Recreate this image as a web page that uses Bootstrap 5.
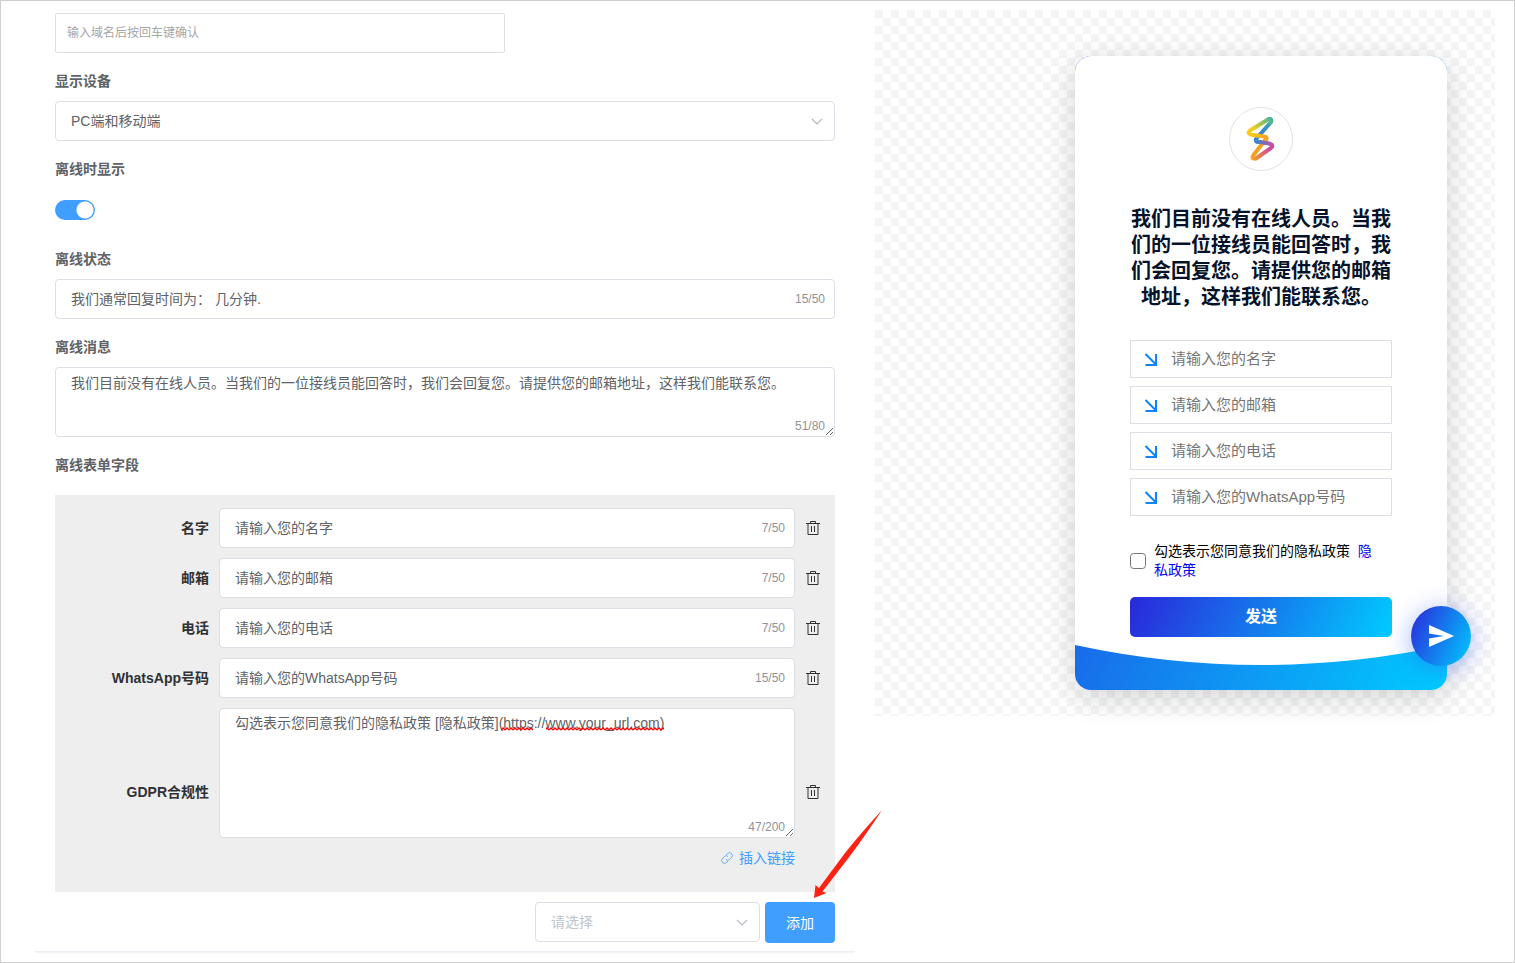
<!DOCTYPE html>
<html lang="zh-CN">
<head>
<meta charset="utf-8">
<meta name="viewport" content="width=device-width, initial-scale=1">
<title>离线表单设置</title>
<link href="https://cdn.jsdelivr.net/npm/bootstrap@5.3.0/dist/css/bootstrap.min.css" rel="stylesheet">
<style>
  body { font-family: "Liberation Sans", "Noto Sans CJK SC", sans-serif; font-size: 14px; line-height: 20px; color: #606266; background: #fff; }
  .page-frame { min-height: 100vh; border: 1px solid #d0d0d0; }
  .workspace { display: grid; grid-template-columns: minmax(0, 820fr) minmax(0, 620fr); gap: 20px; padding: 0 19px 10px 34px; align-items: start; }
  .settings { padding: 12px 20px 8px; border-bottom: 1px solid #ebeef5; box-shadow: 0 2px 1px -1px #f4f4f6; }
  .field-stack { display: flex; flex-direction: column; gap: 18px; }
  .field-title { display: block; font-weight: 700; color: #606266; margin-bottom: 10px; }
  .form-control, .form-select { font-size: 14px; line-height: 20px; color: #606266; border-color: #dcdfe6; border-radius: 4px; padding: 9px 15px; min-height: 40px; background-color: #fff; }
  .form-select { padding-right: 36px; background-size: 12px 12px; background-position: right 11px center;
    --bs-form-select-bg-img: url("data:image/svg+xml,%3csvg xmlns='http://www.w3.org/2000/svg' viewBox='0 0 12 12'%3e%3cpath fill='none' stroke='%23b4b9c2' stroke-width='1.2' d='M1 4l5 5 5-5'/%3e%3c/svg%3e"); background-image: var(--bs-form-select-bg-img); }
  .form-select.is-empty { color: #c0c4cc; width: 225px; }
  textarea.form-control { padding: 5px 15px; display: block; }
  .message-box { height: 70px; }
  .gdpr-box { height: 130px; }
  textarea.gdpr-box { padding-top: 4px; }
  .domain-input { width: 450px; max-width: 100%; font-size: 12px; padding: 9px 11px; border-radius: 2px; }
  .domain-input::placeholder { color: #a6a6a6; }
  .limit { position: absolute; right: 10px; top: 10px; font-size: 12px; color: #909399; pointer-events: none; }
  .limit-low { top: auto; bottom: 1px; }
  .has-limit { padding-right: 60px; }
  .switch-row { height: 42px; }
  .form-check-input.toggle { width: 40px; height: 20px; margin: 0; border: 0; border-radius: 10px; background-color: #dcdfe6;
    background-image: radial-gradient(circle closest-side, #fff 8px, transparent 9px); background-size: 20px 20px; background-position: left center; background-repeat: no-repeat; }
  .form-check-input.toggle:checked { background-color: #409eff; background-position: right center; background-image: radial-gradient(circle, #fff 8px, transparent 9px); }
  .field-panel { background: #eee; margin-top: 20px; padding: 13px 14px 24px 10px; display: grid; grid-template-columns: 144px minmax(0, 1fr) 16px; gap: 10px; align-items: center; }
  .field-panel label { text-align: right; font-weight: 700; color: #303133; }
  .field-panel .tall-row { padding-top: 38px; height: 54px; box-sizing: content-box; line-height: 16px; height: 16px; }
  .icon-btn { border: 0; background: none; padding: 0; width: 16px; height: 16px; display: flex; color: #303133; }
  .insert-link { grid-column: 2; justify-self: end; color: #409eff; text-decoration: none; display: flex; align-items: center; gap: 6px; }
  .spell { position: absolute; top: 19px; left: 282px; pointer-events: none; }
  .btn-add { background: #409eff; color: #fff; font-size: 14px; border: 0; border-radius: 4px; width: 70px; height: 41px; }
  .pick-row { gap: 5px; margin-top: 10px; }
  .pointer-arrow { position: absolute; right: -48px; bottom: 44px; pointer-events: none; }

  .preview { margin-top: 9px; padding: 46px 48px 26px 20px; min-height: 706px; background: repeating-conic-gradient(#fff 0 25%, #f5f5f5 0 50%) 0 0 / 16px 16px; }
  .chat-box { position: relative; width: 372px; max-width: 100%; border-radius: 16px; background: linear-gradient(115deg, #2a27da, #00ccff); box-shadow: 0 7px 30px rgba(9, 14, 21, .18); }
  .chat-body { background: #fff; border-radius: 16px 16px 0 0; padding: 51px 55px 8px; }
  .chat-logo { width: 64px; height: 64px; border: 1px solid #e3e3e3; border-radius: 50%; }
  .chat-title { font-size: 20px; line-height: 26px; font-weight: 700; color: #06132b; margin: 35px 0 30px; text-align: center; }
  .chat-field { display: flex; align-items: center; height: 38px; border: 1px solid #dbdfe6; padding-left: 13px; gap: 13px; }
  .chat-field input { flex: 1; min-width: 0; border: 0; outline: 0; padding: 0; font-size: 15px; color: #000; }
  .chat-field input::placeholder { color: #757575; }
  .consent { margin: 26px 0 17px; color: #000; line-height: 19px; gap: 8px; padding-right: 16px; }
  .consent input { width: 16px; height: 16px; flex: none; margin: 0; border: 1px solid #767676; border-radius: 3px; }
  .consent a { color: #00e; text-decoration: none; }
  .btn-send { width: 100%; height: 40px; border: 0; border-radius: 5px; font-size: 16px; font-weight: 700; color: #fff; background: linear-gradient(115deg, #2a27da, #00ccff); }
  .wave { display: block; width: 100%; height: 45px; }
  .fab { position: absolute; right: -24px; bottom: 24px; width: 60px; height: 60px; border: 0; border-radius: 50%; padding: 0; background: linear-gradient(115deg, #2a27da, #00ccff); box-shadow: 0 4px 24px rgba(50, 90, 240, .45); display: flex; align-items: center; justify-content: center; }
</style>
</head>
<body>
<svg class="d-none" aria-hidden="true">
  <symbol id="i-trash" viewBox="0 0 16 16"><path fill="none" stroke="currentColor" d="M1 3.5h14M5.5 3V1.5h5V3M3 3.5v11h10v-11M6.5 6v6M9.5 6v6"/></symbol>
  <symbol id="i-corner" viewBox="0 0 14 14"><path fill="none" stroke="#0a84ff" stroke-width="2" d="M1.500 2l10 10M12 2v11M13 13H1.500"/></symbol>
</svg>
<div class="page-frame">
  <div class="workspace">
    <main class="settings">
      <form class="field-stack">
        <input class="form-control domain-input" type="text" aria-label="域名" placeholder="输入域名后按回车键确认">
        <div>
          <label class="field-title" for="device">显示设备</label>
          <select class="form-select" id="device"><option>PC端和移动端</option></select>
        </div>
        <div>
          <label class="field-title" for="offline">离线时显示</label>
          <div class="switch-row d-flex align-items-center form-switch p-0">
            <input class="form-check-input toggle" type="checkbox" role="switch" id="offline" checked>
          </div>
        </div>
        <div>
          <label class="field-title" for="status">离线状态</label>
          <div class="position-relative">
            <input class="form-control has-limit" id="status" type="text" value="我们通常回复时间为： 几分钟.">
            <span class="limit">15/50</span>
          </div>
        </div>
        <div>
          <label class="field-title" for="message">离线消息</label>
          <div class="position-relative">
            <textarea class="form-control message-box" id="message">我们目前没有在线人员。当我们的一位接线员能回答时，我们会回复您。请提供您的邮箱地址，这样我们能联系您。</textarea>
            <span class="limit limit-low">51/80</span>
          </div>
        </div>
        <div class="position-relative">
          <div class="field-title mb-0">离线表单字段</div>
          <div class="field-panel">
            <label for="f-name">名字</label>
            <div class="position-relative"><input class="form-control has-limit" id="f-name" value="请输入您的名字"><span class="limit">7/50</span></div>
            <button type="button" class="icon-btn" aria-label="删除"><svg width="16" height="16"><use href="#i-trash"/></svg></button>
            <label for="f-mail">邮箱</label>
            <div class="position-relative"><input class="form-control has-limit" id="f-mail" value="请输入您的邮箱"><span class="limit">7/50</span></div>
            <button type="button" class="icon-btn" aria-label="删除"><svg width="16" height="16"><use href="#i-trash"/></svg></button>
            <label for="f-tel">电话</label>
            <div class="position-relative"><input class="form-control has-limit" id="f-tel" value="请输入您的电话"><span class="limit">7/50</span></div>
            <button type="button" class="icon-btn" aria-label="删除"><svg width="16" height="16"><use href="#i-trash"/></svg></button>
            <label for="f-wa">WhatsApp号码</label>
            <div class="position-relative"><input class="form-control has-limit" id="f-wa" value="请输入您的WhatsApp号码"><span class="limit">15/50</span></div>
            <button type="button" class="icon-btn" aria-label="删除"><svg width="16" height="16"><use href="#i-trash"/></svg></button>
            <label for="f-gdpr" class="tall-row">GDPR合规性</label>
            <div class="position-relative">
              <textarea class="form-control gdpr-box" id="f-gdpr" spellcheck="false">勾选表示您同意我们的隐私政策 [隐私政策](https://www.your_url.com)</textarea>
              <svg class="spell" width="164" height="4" aria-hidden="true">
                <defs><pattern id="zig" width="4" height="4" patternUnits="userSpaceOnUse"><path d="M0 3l2-2 2 2" fill="none" stroke="#f00" stroke-width="1.300"/></pattern></defs>
                <path fill="url(#zig)" d="M0 0h32v4H0zM45 0h118v4H45z"/>
              </svg>
              <span class="limit limit-low">47/200</span>
            </div>
            <button type="button" class="icon-btn tall-row" aria-label="删除"><svg width="16" height="16"><use href="#i-trash"/></svg></button>
            <a href="#" class="insert-link">
              <svg width="12" height="12" viewBox="0 0 12 12" fill="none" stroke="currentColor" stroke-width="0.800"><path d="M5 3l1.500-1.500a2.400 2.400 0 0 1 4 4L8.500 7.500A2.400 2.400 0 0 1 5 7.500M7 9l-1.500 1.500a2.400 2.400 0 0 1-4-4L3.500 4.500A2.400 2.400 0 0 1 7 4.500"/></svg>插入链接</a>
          </div>
          <div class="pick-row d-flex justify-content-end align-items-start">
            <select class="form-select is-empty" aria-label="字段"><option>请选择</option></select>
            <button type="button" class="btn-add">添加</button>
          </div>
          <svg class="pointer-arrow" width="70" height="90" viewBox="0 0 70 90" aria-hidden="true"><path fill="#ff2213" d="M69 1Q48 24 32 44L6 79 2.500 76 1 89l12.500-5-4-1.500L37 47Q52 27 69 1z"/></svg>
        </div>
      </form>
    </main>
    <aside class="preview d-flex justify-content-end align-items-start">
      <div class="chat-box">
        <div class="chat-body">
          <svg class="chat-logo d-block mx-auto" viewBox="0 0 62 62" role="img" aria-label="logo">
            <defs>
              <linearGradient id="ga" gradientUnits="userSpaceOnUse" x1="20" y1="26" x2="43" y2="12"><stop offset="0.200" stop-color="#f7ce1e"/><stop offset="1" stop-color="#3ab5a0"/></linearGradient>
              <linearGradient id="gb" gradientUnits="userSpaceOnUse" x1="42" y1="12" x2="27" y2="30"><stop offset="0" stop-color="#3ab5a0"/><stop offset="0.600" stop-color="#3a86cc"/></linearGradient>
              <linearGradient id="gc" gradientUnits="userSpaceOnUse" x1="26" y1="33" x2="43" y2="38"><stop offset="0" stop-color="#3a86cc"/><stop offset="1" stop-color="#cf4a9e"/></linearGradient>
              <linearGradient id="gd" gradientUnits="userSpaceOnUse" x1="43" y1="38" x2="24" y2="50"><stop offset="0.200" stop-color="#cf4a9e"/><stop offset="1" stop-color="#f59331"/></linearGradient>
              <linearGradient id="ge" gradientUnits="userSpaceOnUse" x1="20" y1="26" x2="38" y2="30"><stop offset="0" stop-color="#f7ce1e"/><stop offset="1" stop-color="#f5a021"/></linearGradient>
            </defs>
            <g fill="none" stroke-width="4" stroke-linecap="round" stroke-linejoin="round">
              <path stroke="#f5a021" d="M36 31L23.500 47Q21 51 25 50.500"/>
              <path stroke="url(#gb)" d="M39 11Q42 11 41 14L26 31Q25 34 28 34"/>
              <path stroke="url(#ga)" d="M19 25.500Q18 24 20 22.500L38 11.500Q42 10 41 14"/>
              <path stroke="url(#ge)" d="M19 25.500Q20 27 23 27L34 28.500Q38 29 36 32"/>
              <path stroke="url(#gc)" d="M27 33.500L39 35.500Q43 36.500 42 38.500"/>
              <path stroke="url(#gd)" d="M42 38.500L41 40L26 50.500"/>
            </g>
          </svg>
          <h2 class="chat-title">我们目前没有在线人员。当我们的一位接线员能回答时，我们会回复您。请提供您的邮箱地址，这样我们能联系您。</h2>
          <div class="d-grid gap-2">
            <label class="chat-field"><svg width="14" height="14"><use href="#i-corner"/></svg><input type="text" aria-label="名字" placeholder="请输入您的名字"></label>
            <label class="chat-field"><svg width="14" height="14"><use href="#i-corner"/></svg><input type="email" aria-label="邮箱" placeholder="请输入您的邮箱"></label>
            <label class="chat-field"><svg width="14" height="14"><use href="#i-corner"/></svg><input type="tel" aria-label="电话" placeholder="请输入您的电话"></label>
            <label class="chat-field"><svg width="14" height="14"><use href="#i-corner"/></svg><input type="text" aria-label="WhatsApp号码" placeholder="请输入您的WhatsApp号码"></label>
          </div>
          <div class="consent d-flex align-items-center">
            <input class="form-check-input" type="checkbox" id="agree">
            <label for="agree">勾选表示您同意我们的隐私政策&nbsp; <a href="#">隐私政策</a></label>
          </div>
          <button type="button" class="btn-send">发送</button>
        </div>
        <svg class="wave" viewBox="0 0 372 45" preserveAspectRatio="none" aria-hidden="true"><path fill="#fff" d="M0 -1V0Q186 40 372 0V-1z"/></svg>
        <button type="button" class="fab" aria-label="打开聊天"><svg width="26" height="22" viewBox="0 0 26 22"><path fill="#fff" d="M1 0l25 11L1 22v-8.500L16 11 1 8.500z"/></svg></button>
      </div>
    </aside>
  </div>
</div>
<script src="https://cdn.jsdelivr.net/npm/bootstrap@5.3.0/dist/js/bootstrap.bundle.min.js"></script>
</body>
</html>
